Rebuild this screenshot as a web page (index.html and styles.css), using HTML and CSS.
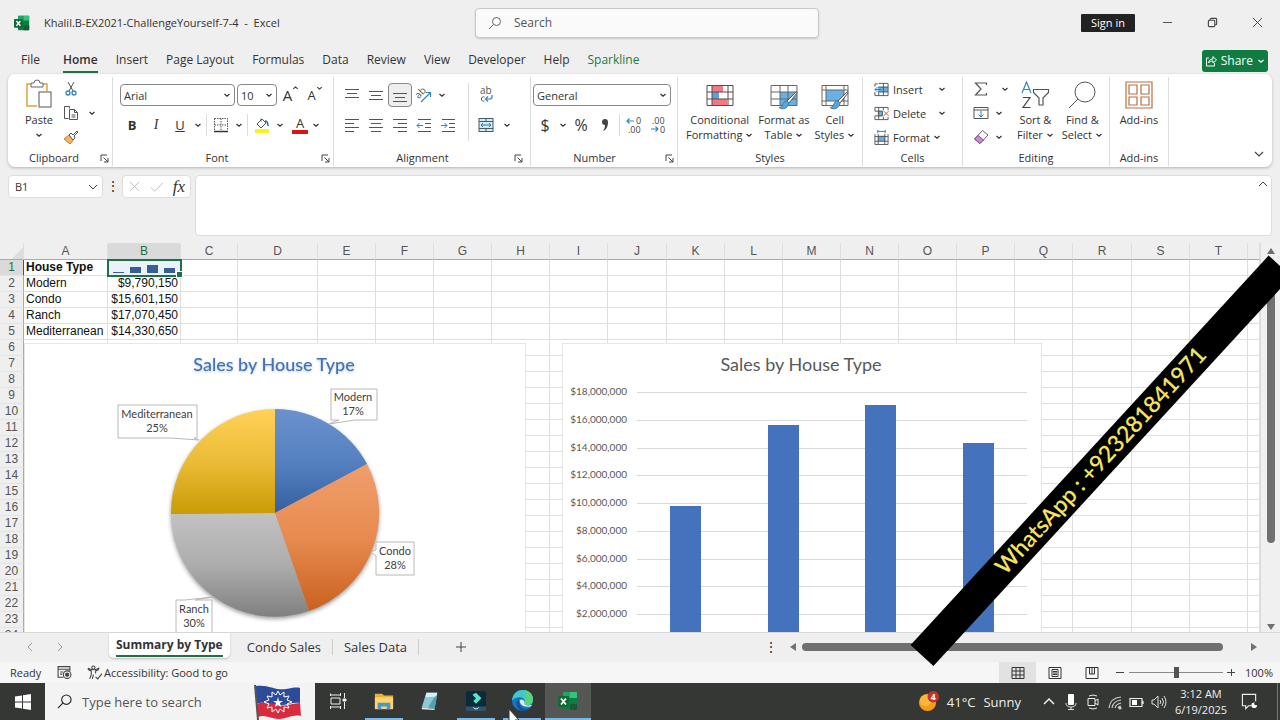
FILE: index.html
```html
<!DOCTYPE html>
<html lang="en">
<head>
    <meta charset="UTF-8">
    <meta name="viewport" content="width=device-width, initial-scale=1.0">
    <title>Khalil.B-EX2021-ChallengeYourself-7-4 - Excel</title>
    <link rel="stylesheet" href="styles.css">
</head>
<body>
    <!-- Shared icons -->
    <svg class="defs" aria-hidden="true">
        <symbol id="chev" viewBox="0 0 8 8"><path d="M1.5 3 4 5.2 6.500 3" fill="none" stroke="currentColor" stroke-width="1.200"/></symbol>
        <symbol id="launch" viewBox="0 0 9 9"><path d="M1 7V1h6M3.500 3.500 8 8M8 4v4H4" fill="none" stroke="#444"/></symbol>
        <symbol id="excel" viewBox="0 0 20 20">
            <path d="M6 1h12a1 1 0 0 1 1 1v16a1 1 0 0 1-1 1H6a1 1 0 0 1-1-1V2a1 1 0 0 1 1-1z" fill="#107c41"/>
            <path d="M5 1h7v6H5z" fill="#21a366"/><path d="M12 1h6a1 1 0 0 1 1 1v5h-7z" fill="#33c481"/>
            <path d="M12 13h7v5a1 1 0 0 1-1 1h-6z" fill="#185c37"/>
            <rect x="0" y="5" width="11" height="11" rx="1" fill="#0e6b38"/>
            <path d="M3 7.500 8 13.500M8 7.500 3 13.500" stroke="#fff" stroke-width="1.700"/>
        </symbol>
        <symbol id="brush" viewBox="0 0 20 20">
            <path d="M18.500 1.500 9 11l2 2 8-10z" fill="#fff" stroke="#555"/>
            <path d="M9 11c-3 0-4 2-4.500 4S2 17.500 1 17.500c3 2.500 9 1.500 10-4.500z" fill="#5aa5dc" stroke="#3b7fb0"/>
        </symbol>
    </svg>

    <div class="app">
        <header class="titlebar">
            <div class="doc">
                <svg class="doc-logo"><use href="#excel"/></svg>
                <span>Khalil.B-EX2021-ChallengeYourself-7-4&nbsp; -&nbsp; Excel</span>
            </div>
            <label class="search">
                <svg viewBox="0 0 14 14"><circle cx="8.500" cy="5.500" r="4" fill="none" stroke="#666"/><path d="M5.500 8.500 1 13" stroke="#666"/></svg>
                <input type="text" placeholder="Search" aria-label="Search">
            </label>
            <div class="window">
                <button class="signin">Sign in</button>
                <button class="win-btn" aria-label="Minimize"><svg viewBox="0 0 12 12"><path d="M1 6h10" stroke="#444"/></svg></button>
                <button class="win-btn" aria-label="Restore"><svg viewBox="0 0 12 12" fill="none" stroke="#444" stroke-width="1.200"><rect x="1.500" y="3.500" width="7" height="7" rx="1"/><path d="M3.500 3.500v-1a1 1 0 0 1 1-1h5a1 1 0 0 1 1 1v5a1 1 0 0 1-1 1h-1"/></svg></button>
                <button class="win-btn" aria-label="Close"><svg viewBox="0 0 12 12"><path d="m1 1 10 10M11 1 1 11" stroke="#444"/></svg></button>
            </div>
        </header>

        <nav class="menu">
            <button>File</button>
            <button class="active">Home</button>
            <button>Insert</button>
            <button>Page Layout</button>
            <button>Formulas</button>
            <button>Data</button>
            <button>Review</button>
            <button>View</button>
            <button>Developer</button>
            <button>Help</button>
            <button class="context">Sparkline</button>
            <button class="share">
                <svg viewBox="0 0 12 12" fill="none" stroke="#fff"><path d="M4 3H1.500v8h8V8M3.500 8c.5-3 2-4 4.500-4V1.500L11.500 5 8 8V6C6 6 4.500 6.500 3.500 8z"/></svg>
                Share
                <svg class="chev"><use href="#chev"/></svg>
            </button>
        </nav>

        <section class="ribbon" aria-label="Ribbon">
            <div class="group g-clipboard">
                <div class="group-body">
                    <button class="big">
                        <svg class="big-icon" viewBox="0 0 28 28" fill="none">
                            <path d="M6 3H2v22h10M18 3h4v7" stroke="#e0a43a" stroke-width="1.500"/>
                            <path d="M6 5V2h3a3 3 0 0 1 6 0h3v4H6z" fill="#fff" stroke="#666"/>
                            <rect x="14" y="11" width="12" height="15" fill="#fff" stroke="#555"/>
                        </svg>
                        Paste
                        <svg class="chev"><use href="#chev"/></svg>
                    </button>
                    <div class="stack">
                        <button class="tool" aria-label="Cut"><svg viewBox="0 0 16 16" fill="none"><path d="M5 1l5 9M11 1 6 10" stroke="#555"/><circle cx="5" cy="12" r="2" stroke="#2f86c4" stroke-width="1.300"/><circle cx="11" cy="12" r="2" stroke="#2f86c4" stroke-width="1.300"/></svg></button>
                        <div class="pair">
                            <button class="tool" aria-label="Copy"><svg viewBox="0 0 16 16" fill="none" stroke="#555"><path d="M5.500 13.500h-4v-12h5v2"/><path d="M6.500 4.500h5l3 3v7h-8z" fill="#fff"/><path d="M11.500 4.500v3h3M8.500 10h4M8.500 12h4"/></svg></button>
                            <button class="drop" aria-label="Copy options"><svg class="chev"><use href="#chev"/></svg></button>
                        </div>
                        <button class="tool" aria-label="Format Painter"><svg viewBox="0 0 16 16"><path d="M1 10l5-4 5 4-4 5z" fill="#f5b26b" stroke="#cf7a2a"/><path d="m6 6 2-2 2 2 4-4 1 1-4 4 1 2-2 2z" fill="#fff" stroke="#555"/></svg></button>
                    </div>
                </div>
                <div class="group-name">Clipboard<svg class="launch"><use href="#launch"/></svg></div>
            </div>

            <div class="group g-font">
                <div class="group-body rows">
                    <div class="row">
                        <label class="combo font-name"><select aria-label="Font"><option>Arial</option></select><svg class="chev"><use href="#chev"/></svg></label>
                        <label class="combo font-size"><select aria-label="Font size"><option>10</option></select><svg class="chev"><use href="#chev"/></svg></label>
                        <button class="tool grow">A<svg class="chev flip"><use href="#chev"/></svg></button>
                        <button class="tool shrink">A<svg class="chev"><use href="#chev"/></svg></button>
                    </div>
                    <div class="row">
                        <button class="tool bold">B</button>
                        <button class="tool italic">I</button>
                        <button class="tool underline">U</button>
                        <button class="drop" aria-label="Underline options"><svg class="chev"><use href="#chev"/></svg></button>
                        <span class="sep"></span>
                        <button class="tool" aria-label="Borders"><svg viewBox="0 0 16 16" fill="none" stroke="#555"><path d="M1.500 1.500h13v12M1.500 1.500v12M8 1.500v12M1.500 8h13" stroke-dasharray="1.500 1"/><path d="M1 14.500h14" stroke="#333" stroke-width="1.500"/></svg></button>
                        <button class="drop" aria-label="Border options"><svg class="chev"><use href="#chev"/></svg></button>
                        <span class="sep"></span>
                        <button class="tool" aria-label="Fill color"><svg viewBox="0 0 16 16"><path d="M7 1.500v3M3 7l5-5 4 4-5 5z" fill="#fff" stroke="#555"/><path d="M11 4c2 0 3 2 3 5" fill="none" stroke="#2f6fa8" stroke-width="1.500"/><path d="M1 12h14v4H1z" fill="#f7f51b"/></svg></button>
                        <button class="drop" aria-label="Fill options"><svg class="chev"><use href="#chev"/></svg></button>
                        <button class="tool font-color">A</button>
                        <button class="drop" aria-label="Font color options"><svg class="chev"><use href="#chev"/></svg></button>
                    </div>
                </div>
                <div class="group-name">Font<svg class="launch"><use href="#launch"/></svg></div>
            </div>

            <div class="group g-align">
                <div class="group-body">
                    <div class="rows">
                        <div class="row">
                            <button class="tool" aria-label="Top align"><svg viewBox="0 0 16 16" stroke="#555"><path d="M1 2.500h14M3 6.500h10M1 10.500h14"/></svg></button>
                            <button class="tool" aria-label="Middle align"><svg viewBox="0 0 16 16" stroke="#555"><path d="M1 4.500h14M3 8.500h10M1 12.500h14"/></svg></button>
                            <button class="tool pressed" aria-label="Bottom align"><svg viewBox="0 0 16 16" stroke="#555"><path d="M1 6.500h14M3 10.500h10M1 14.500h14"/></svg></button>
                            <button class="tool orient" aria-label="Orientation"><svg viewBox="0 0 16 16"><text x="0" y="10" transform="rotate(-45 4 8)" font-size="10" fill="#555">ab</text><path d="M5 15 14 6M10 5.500h4.500V10" fill="none" stroke="#2f86c4" stroke-width="1.200"/></svg></button>
                            <button class="drop" aria-label="Orientation options"><svg class="chev"><use href="#chev"/></svg></button>
                        </div>
                        <div class="row">
                            <button class="tool" aria-label="Align left"><svg viewBox="0 0 16 16" stroke="#555"><path d="M1 2.500h14M1 6.500h9M1 10.500h14M1 14.500h9"/></svg></button>
                            <button class="tool" aria-label="Center"><svg viewBox="0 0 16 16" stroke="#555"><path d="M1 2.500h14M3 6.500h10M1 10.500h14M3 14.500h10"/></svg></button>
                            <button class="tool" aria-label="Align right"><svg viewBox="0 0 16 16" stroke="#555"><path d="M1 2.500h14M6 6.500h9M1 10.500h14M6 14.500h9"/></svg></button>
                            <button class="tool" aria-label="Decrease indent"><svg viewBox="0 0 16 16" fill="none" stroke="#555"><path d="M2 2.500h13M9 6.500h6M9 10.500h6M2 14.500h13"/><path d="M7 8.500H1M3.500 6 1 8.500 3.500 11" stroke="#2f86c4"/></svg></button>
                            <button class="tool" aria-label="Increase indent"><svg viewBox="0 0 16 16" fill="none" stroke="#555"><path d="M2 2.500h13M9 6.500h6M9 10.500h6M2 14.500h13"/><path d="M1 8.500h6M4.500 6 7 8.500 4.500 11" stroke="#2f86c4"/></svg></button>
                        </div>
                    </div>
                    <span class="sep tall"></span>
                    <div class="rows">
                        <div class="row"><button class="tool" aria-label="Wrap text"><svg viewBox="0 0 16 16"><text x="2" y="7" font-size="10" fill="#555">ab</text><path d="M6.500 10a2.200 2.200 0 1 0 0 4" fill="none" stroke="#555"/><path d="M14 8v2q0 2-2 2H8M10 9.500 7.500 12l2.500 2.500" fill="none" stroke="#2f86c4" stroke-width="1.200"/></svg></button></div>
                        <div class="row">
                            <button class="tool" aria-label="Merge and center"><svg viewBox="0 0 16 16" fill="none"><rect x="1" y="1.500" width="14" height="13" fill="#d4ebf8" stroke="#4a5b66"/><path d="M1 4.500h14M1 11.500h14M8 1.500v3M8 11.500v3" stroke="#4a5b66"/><path d="M3 8h10M5 6 3 8l2 2M11 6l2 2-2 2" stroke="#1f7fc0"/></svg></button>
                            <button class="drop wide" aria-label="Merge options"><svg class="chev"><use href="#chev"/></svg></button>
                        </div>
                    </div>
                </div>
                <div class="group-name">Alignment<svg class="launch"><use href="#launch"/></svg></div>
            </div>

            <div class="group g-number">
                <div class="group-body rows">
                    <div class="row"><label class="combo number-format"><select aria-label="Number format"><option>General</option></select><svg class="chev"><use href="#chev"/></svg></label></div>
                    <div class="row">
                        <button class="tool sign">$</button>
                        <button class="drop" aria-label="Currency options"><svg class="chev"><use href="#chev"/></svg></button>
                        <button class="tool sign">%</button>
                        <button class="tool" aria-label="Comma style"><svg viewBox="0 0 16 16"><path d="M5 5a3 3 0 1 1 6 0c0 5-2 8-5 9 1-2 2-3 2-6a3 3 0 0 1-3-3z" fill="#444"/></svg></button>
                        <span class="sep"></span>
                        <button class="tool" aria-label="Increase decimal"><svg viewBox="0 0 16 16"><text x="10" y="7" font-size="9" fill="#444">0</text><text x="2" y="16" font-size="9" fill="#444">.00</text><path d="M8 4H1M3.500 1.500 1 4l2.500 2.500" fill="none" stroke="#2f86c4" stroke-width="1.200"/></svg></button>
                        <button class="tool" aria-label="Decrease decimal"><svg viewBox="0 0 16 16"><text x="2" y="7" font-size="9" fill="#444">.00</text><text x="10" y="16" font-size="9" fill="#444">0</text><path d="M1 12h7M5.500 9.500 8 12l-2.500 2.500" fill="none" stroke="#2f86c4" stroke-width="1.200"/></svg></button>
                    </div>
                </div>
                <div class="group-name">Number<svg class="launch"><use href="#launch"/></svg></div>
            </div>

            <div class="group g-styles">
                <div class="group-body">
                    <button class="big">
                        <svg class="big-icon" viewBox="0 0 28 28" fill="none"><rect x="1" y="4" width="26" height="21" fill="#fff"/><path d="M6 4h11v7H6zM6 18h15v7H6z" fill="#f4797c"/><path d="M6 11h7v7H6z" fill="#5f9fd2"/><path d="M1 4.500h26v20H1zM6 4.500v20M22 4.500v20M1 11h26M1 18h26" stroke="#5b4b4b"/></svg>
                        Conditional<br>Formatting <svg class="chev"><use href="#chev"/></svg>
                    </button>
                    <button class="big">
                        <svg class="big-icon" viewBox="0 0 28 28" fill="none"><path d="M10 11h17v14H10z" fill="#69b0e4"/><path d="M1 4.500h26v20H1zM10 4.500v20M18 4.500v20M1 11h26M1 18h26" stroke="#666"/><use href="#brush" x="8" y="9" width="20" height="20"/></svg>
                        Format as<br>Table <svg class="chev"><use href="#chev"/></svg>
                    </button>
                    <button class="big">
                        <svg class="big-icon" viewBox="0 0 28 28" fill="none"><path d="M5 9h18v11H5z" fill="#69b0e4"/><path d="M1 4.500h26v20H1zM5 4.500v20M23 4.500v20M1 9h26M1 20h26" stroke="#666"/><use href="#brush" x="8" y="9" width="20" height="20"/></svg>
                        Cell<br>Styles <svg class="chev"><use href="#chev"/></svg>
                    </button>
                </div>
                <div class="group-name">Styles</div>
            </div>

            <div class="group g-cells">
                <div class="group-body stack">
                    <button class="line"><svg class="icon" viewBox="0 0 16 16" fill="none"><path d="M4 5h11v6H4z" fill="#69b0e4"/><path d="M5 1.500h10v13H1v-4M10 1.500v13M5 11v3.500M5 5.500h10M5 10.500h10M1 5V2h3" stroke="#555"/><path d="M8 8H1M3.500 5.500 1 8l2.500 2.500" stroke="#1f7fc0"/></svg><span>Insert</span><svg class="chev"><use href="#chev"/></svg></button>
                    <button class="line"><svg class="icon" viewBox="0 0 16 16" fill="none"><path d="M4 5h5v6H4z" fill="#69b0e4"/><path d="M1 5.500V1.500h14v3M1 10.500v4h14v-3M5 1.500v13M10 1.500v3M10 11.500v3M1 5.500h8v5H1" stroke="#555"/><path d="m10.500 5.500 5 5M15.500 5.500l-5 5" stroke="#d9483b"/></svg><span>Delete</span><svg class="chev"><use href="#chev"/></svg></button>
                    <button class="line tight"><svg class="icon" viewBox="0 0 16 16" fill="none"><path d="M4 6h8v6H4z" fill="#69b0e4"/><path d="M1 4.500v11h14v-11M4.500 4v11M11.500 4v11M1 7h14M1 12h14" stroke="#555"/><path d="M4 1.500h8M4 0v3M12 0v3" stroke="#1f7fc0"/></svg><span>Format</span><svg class="chev"><use href="#chev"/></svg></button>
                </div>
                <div class="group-name">Cells</div>
            </div>

            <div class="group g-editing">
                <div class="group-body">
                    <div class="stack">
                        <div class="pair wide"><button class="tool" aria-label="AutoSum"><svg viewBox="0 0 16 16"><path d="M13.500 4V2h-11l5.500 6-5.500 6h11v-2" fill="none" stroke="#555" stroke-width="1.200"/></svg></button><button class="drop" aria-label="AutoSum options"><svg class="chev"><use href="#chev"/></svg></button></div>
                        <div class="pair"><button class="tool" aria-label="Fill"><svg viewBox="0 0 16 16" fill="none" stroke="#555"><path d="M1 2.500h14v11H1zM1 5h14"/><path d="M8 6v6M5.500 9.500 8 12l2.500-2.500" stroke="#1f7fc0"/></svg></button><button class="drop" aria-label="Fill options"><svg class="chev"><use href="#chev"/></svg></button></div>
                        <div class="pair"><button class="tool" aria-label="Clear"><svg viewBox="0 0 16 16"><path d="M9.500 1.500 15 6l-8 8.500L1.500 10z" fill="#fff" stroke="#7d4f8b"/><path d="M5 6.500 1.500 10 7 14.500 10.500 11z" fill="#c98ad6" stroke="#7d4f8b"/></svg></button><button class="drop" aria-label="Clear options"><svg class="chev"><use href="#chev"/></svg></button></div>
                    </div>
                    <button class="big">
                        <svg class="big-icon" viewBox="0 0 28 28" fill="none"><path d="M1 12 5.500 1 10 12M2.500 8.500h6" stroke="#2f86c4" stroke-width="1.200"/><path d="M2 16.500h7L2 26.500h7.500" stroke="#444" stroke-width="1.200"/><path d="M12.500 8.500h15v3l-5.500 5.500v7h-4v-7l-5.500-5.500z" stroke="#555" stroke-width="1.200"/></svg>
                        Sort &amp;<br>Filter <svg class="chev"><use href="#chev"/></svg>
                    </button>
                    <button class="big">
                        <svg class="big-icon" viewBox="0 0 28 28" fill="none" stroke="#555"><circle cx="17" cy="11" r="10"/><path d="M10 18 1 27"/></svg>
                        Find &amp;<br>Select <svg class="chev"><use href="#chev"/></svg>
                    </button>
                </div>
                <div class="group-name">Editing</div>
            </div>

            <div class="group g-addins">
                <div class="group-body">
                    <button class="big">
                        <svg class="big-icon" viewBox="0 0 28 28" fill="none" stroke="#b5713f" stroke-width="1.200"><path d="M1 1h26v26H1zM4 4h8v9H4zM16 4h8v9h-8zM4 16h8v8H4zM16 16h8v8h-8z"/></svg>
                        Add-ins
                    </button>
                </div>
                <div class="group-name">Add-ins</div>
            </div>
            <button class="collapse" aria-label="Collapse ribbon"><svg viewBox="0 0 10 10"><path d="M1 3l4 4 4-4" fill="none" stroke="#444" stroke-width="1.200"/></svg></button>
        </section>

        <section class="formula" aria-label="Formula bar">
            <label class="name-box"><input type="text" value="B1" aria-label="Name box"><svg viewBox="0 0 10 10"><path d="M1 3l4 4 4-4" fill="none" stroke="#444"/></svg></label>
            <span class="dots">⋮</span>
            <div class="fx">
                <button aria-label="Cancel"><svg viewBox="0 0 14 14"><path d="m2 2 10 10M12 2 2 12" stroke="#bbb"/></svg></button>
                <button aria-label="Enter"><svg viewBox="0 0 14 14"><path d="m1 8 4 4 9-9" fill="none" stroke="#bbb"/></svg></button>
                <button class="fx-btn">fx</button>
            </div>
            <div class="formula-box">
                <textarea aria-label="Formula"></textarea>
                <button aria-label="Collapse formula bar"><svg viewBox="0 0 10 10"><path d="M1 7l4-4 4 4" fill="none" stroke="#444"/></svg></button>
            </div>
        </section>

        <main class="workspace">
            <div class="sheet">
                <table class="grid">
                    <colgroup id="cols"></colgroup>
                    <thead><tr id="letters"></tr></thead>
                    <tbody id="cells"></tbody>
                </table>

                <!-- Pie chart -->
                <svg class="chart pie" viewBox="0 0 502 300" role="img" aria-label="Sales by House Type, pie chart">
                    <defs>
                        <linearGradient id="blue" x1="0" y1="0" x2="0" y2="1"><stop offset="0" stop-color="#6c91cd"/><stop offset="0.500" stop-color="#5581c2"/><stop offset="1" stop-color="#355f9f"/></linearGradient>
                        <linearGradient id="orange" x1="0" y1="0" x2="0" y2="1"><stop offset="0" stop-color="#f09e6c"/><stop offset="0.500" stop-color="#e78b50"/><stop offset="1" stop-color="#ca611f"/></linearGradient>
                        <linearGradient id="gray" x1="0" y1="0" x2="0" y2="1"><stop offset="0" stop-color="#c2c2c2"/><stop offset="0.500" stop-color="#adadad"/><stop offset="1" stop-color="#808080"/></linearGradient>
                        <linearGradient id="gold" x1="0" y1="0" x2="0" y2="1"><stop offset="0" stop-color="#ffd158"/><stop offset="0.500" stop-color="#ebbc37"/><stop offset="1" stop-color="#c99b05"/></linearGradient>
                    </defs>
                    <rect class="chart-bg" x="0" y="0" width="502" height="300"/>
                    <text class="pie-title" x="250" y="28">Sales by House Type</text>
                    <g class="slices">
                        <path d="M251 170V66A104 104 0 0 1 343 121z" fill="url(#blue)"/>
                        <path d="M251 170 343 121A104 104 0 0 1 285 268z" fill="url(#orange)"/>
                        <path d="M251 170 285 268A104 104 0 0 1 147 171z" fill="url(#gray)"/>
                        <path d="M251 170 147 171A104 104 0 0 1 251 66z" fill="url(#gold)"/>
                    </g>
                    <g class="callouts">
                        <path d="M307 46h46v31h-22l-26 4 10-4h-8z"/>
                        <path d="M94 62h79v33h-3l5 2-29-2H94z"/>
                        <path d="M352 199h38v33h-38v-19l-5-4 5-2z"/>
                        <path d="M152 257h9l28-3-18 3h17v33h-36z"/>
                    </g>
                    <g class="labels">
                        <text x="329" y="58">Modern</text><text x="329" y="72">17%</text>
                        <text x="133" y="75">Mediterranean</text><text x="133" y="89">25%</text>
                        <text x="371" y="212">Condo</text><text x="371" y="226">28%</text>
                        <text x="170" y="270">Ranch</text><text x="170" y="284">30%</text>
                    </g>
                </svg>

                <!-- Column chart -->
                <svg class="chart columns" viewBox="0 0 480 300" role="img" aria-label="Sales by House Type, column chart">
                    <rect class="chart-bg" x="0" y="0" width="480" height="300"/>
                    <text class="column-title" x="239" y="28">Sales by House Type</text>
                    <g id="axis"></g>
                    <g id="bars"></g>
                </svg>
            </div>
            <div class="vscroll">
                <svg viewBox="0 0 8 8"><path d="M4 1 8 7H0z"/></svg>
                <div class="track"><div class="thumb"></div></div>
                <svg viewBox="0 0 8 8"><path d="M0 1h8L4 7z"/></svg>
            </div>
        </main>

        <div class="tabs">
            <button class="nav" aria-label="Previous sheet"><svg viewBox="0 0 10 10"><path d="M7 1 3 5l4 4" fill="none" stroke="#999"/></svg></button>
            <button class="nav" aria-label="Next sheet"><svg viewBox="0 0 10 10"><path d="m3 1 4 4-4 4" fill="none" stroke="#999"/></svg></button>
            <button class="sheet-tab current"><span>Summary by Type</span></button>
            <button class="sheet-tab">Condo Sales</button>
            <button class="sheet-tab">Sales Data</button>
            <button class="add" aria-label="New sheet"><svg viewBox="0 0 12 12"><path d="M6 1v10M1 6h10" stroke="#444"/></svg></button>
            <div class="hscroll">
                <span class="dots">⋮</span>
                <svg viewBox="0 0 8 8"><path d="M7 0v8L1 4z"/></svg>
                <div class="thumb"></div>
                <svg viewBox="0 0 8 8"><path d="M1 0v8l6-4z"/></svg>
            </div>
        </div>

        <footer class="status">
            <span class="ready">Ready</span>
            <svg class="icon" viewBox="0 0 14 14" fill="none" stroke="#444"><path d="M6 11.500H1v-10h11v4M1 4h11M3 6.500h3M3 8.500h2"/><circle cx="9.500" cy="9" r="3.500"/><circle cx="9.500" cy="9" r="1.500" fill="#444"/></svg>
            <button class="access">
                <svg class="icon" viewBox="0 0 14 14" fill="none" stroke="#444"><circle cx="6" cy="2.500" r="1.500"/><path d="M1 3q0 2 3 2.500V9l-1.500 4M1 3q3 1.500 5 1.500T11 3q0 2-3 2.500V8M6 9l-1 4M8 11l2 2 4-5"/></svg>
                Accessibility: Good to go
            </button>
            <div class="views">
                <button class="view on" aria-label="Normal view"><svg viewBox="0 0 14 14" fill="none" stroke="#333"><path d="M1 1.500h12v11H1zM5 1.500v11M9 1.500v11M1 5h12M1 9h12"/></svg></button>
                <button class="view" aria-label="Page layout view"><svg viewBox="0 0 14 14" fill="none" stroke="#333"><path d="M1 1.500h12v11H1zM4 3.500h6v7H4zM5 5.500h4M5 7h4M5 8.500h4"/></svg></button>
                <button class="view" aria-label="Page break view"><svg viewBox="0 0 14 14" fill="none" stroke="#333"><path d="M1 1.500h12v11H1zM4.500 1.500V8h5V1.500M7 1.500V8"/></svg></button>
                <button class="step" aria-label="Zoom out"><svg viewBox="0 0 9 9"><path d="M0 4.500h8" stroke="#444"/></svg></button>
                <input type="range" min="0" max="100" value="50" aria-label="Zoom">
                <button class="step" aria-label="Zoom in"><svg viewBox="0 0 9 9"><path d="M0 4.500h8M4.500 1v7" stroke="#444"/></svg></button>
                <span class="zoom">100%</span>
            </div>
        </footer>

        <div class="taskbar">
            <button class="start" aria-label="Start"><svg viewBox="0 0 16 16" fill="#fff"><path d="M0 2.500 7 1.500v6H0zM8 1.300 16 0v7.500H8zM0 8.500h7v6l-7-1zM8 8.500h8V16l-8-1.300z"/></svg></button>
            <label class="task-search">
                <svg class="glass" viewBox="0 0 16 16"><circle cx="10" cy="6" r="5" fill="none" stroke="#222" stroke-width="1.200"/><path d="M6.500 9.500 1 15" stroke="#222" stroke-width="1.200"/></svg>
                <input type="text" placeholder="Type here to search" aria-label="Type here to search">
                <svg class="flag" viewBox="0 0 50 36">
                    <path d="M3 2c12-2 20 5 30 3 6-1 10-2 14-1v15c-8-1-14 3-22 2S10 17 3 20z" fill="#2d4b9b"/>
                    <path d="M4 20c7-3 13-1 21 1s14-2 22-2l1 13c-8-2-14 3-22 3S12 30 5 33z" fill="#d92b3e"/>
                    <path d="M2 1l3 35" stroke="#555" stroke-width="2"/>
                    <path d="m25 7 2 4 4-3v5l5-1-2 4 5 2-5 2 2 4-5-1v5l-4-3-2 4-2-4-4 3v-5l-5 1 2-4-5-2 5-2-2-4 5 1V8l4 3z" fill="none" stroke="#fff"/>
                    <path d="m25 13 1 4h4l-3 2 1 4-3-2-3 2 1-4-3-2h4z" fill="#fff"/>
                </svg>
            </label>
            <button class="app-btn" aria-label="Task view"><svg viewBox="0 0 20 20" fill="none" stroke="#eee"><path d="M2.500 5V2.500M2.500 4h10M12.500 2v3M3 7h9v6H3zM2.500 18v-3M2.500 16h10M12.500 18v-3M16.500 2v5M16.500 11v7"/><path d="M15 8h3v2h-3z" fill="#eee"/></svg></button>
            <button class="app-btn open" aria-label="File Explorer"><svg viewBox="0 0 22 20"><path d="M1 2h8l2 2h10v14H1z" fill="#e5b13c"/><path d="M1 6h20v13H1z" fill="#fbd56c"/><path d="M4 19v-7h14v7h-4v-3H8v3z" fill="#4c97cf"/></svg></button>
            <button class="app-btn" aria-label="Notepad"><svg viewBox="0 0 22 22"><path d="M7 2h12l-3 18-14-2z" fill="#8ec7d6"/><path d="M7 2h12l-1 4-12 1z" fill="#d8eff3"/><path d="M15 8l-6 10 7 2 3-16z" fill="#579fae"/><path d="m2 18 14 2v1L2 20z" fill="#e8e8e8"/></svg></button>
            <button class="app-btn open" aria-label="Filmora"><svg viewBox="0 0 22 22"><rect width="22" height="22" rx="2" fill="#0b2b38"/><path d="m7 4 4-2 6 6-6 6-3-3 3-3z" fill="#5de3cd"/><path d="M0 17h22v5H0z" fill="#31536d"/><path d="m8 18 2 2 1-1 1 1 2-2" fill="none" stroke="#fff"/></svg></button>
            <button class="app-btn open edge" aria-label="Edge"><svg viewBox="0 0 24 24"><circle cx="12" cy="12" r="11" fill="#1674c5"/><path d="M1 12C2 4 7 1 12 1c7 0 11 5 11 10 0 4-3 6-6 6-2 0-4-1-3-3 2-5-7-8-13-2z" fill="#40c8cc"/><path d="M14 1c6 1 9 5 9 10 0 4-3 6-6 6-2 0-4-1-3-3 1-1 2-8 0-13z" fill="#5bd27b"/><path d="M9 12c-2 5 3 11 11 8-4 4-12 4-14-3-1-4 1-6 3-5z" fill="#124f9c"/><path d="M9 12c0 4 4 8 12 6 1-1 0-2-1-1-4 1-7-1-6-4-1-2-4-3-5-1z" fill="#dfe9ef"/></svg></button>
            <button class="app-btn open focused" aria-label="Excel"><svg viewBox="0 0 20 20"><use href="#excel"/></svg></button>

            <div class="tray">
                <button class="weather">
                    <svg viewBox="0 0 22 22"><circle cx="10" cy="12" r="9" fill="#f59b1c"/><circle cx="8" cy="10" r="6" fill="#fbb63a"/><circle cx="16" cy="6" r="6" fill="#c8322b"/><text x="16" y="9" font-size="9" font-weight="bold" text-anchor="middle" fill="#fff">4</text></svg>
                    <span>41°C</span><span>Sunny</span>
                </button>
                <button class="tray-btn" aria-label="Hidden icons"><svg viewBox="0 0 16 16"><path d="m3 10 5-5 5 5" fill="none" stroke="#eee" stroke-width="1.500"/></svg></button>
                <button class="tray-btn" aria-label="Microphone"><svg viewBox="0 0 16 16"><rect x="5" y="0" width="6" height="11" rx="1" fill="#fff"/><path d="M3 9q0 4 5 4t5-4M8 13v3M5 15.500h6" fill="none" stroke="#ddd"/></svg></button>
                <button class="tray-btn" aria-label="Meet now"><svg viewBox="0 0 16 16" fill="none" stroke="#eee"><path d="M3 4.500h7v7H3zM10 7l3-2v6l-3-2M4 2q4-2 8 0M4 14q4 2 8 0"/></svg></button>
                <button class="tray-btn" aria-label="Network"><svg viewBox="0 0 16 16" fill="none" stroke="#ccc" stroke-width="1.200"><path d="M2 14Q3 4 14 3M5 14q1-7 9-8M8 14q1-4 6-5M11 14q1-2 3-2"/><circle cx="13" cy="14" r="1" fill="#fff"/></svg></button>
                <button class="tray-btn" aria-label="Battery"><svg viewBox="0 0 16 16"><path d="M1 4.500h12v8H1zM14 7v3" fill="none" stroke="#eee" stroke-width="1.200"/><path d="M3 6h5v5H3z" fill="#fff"/></svg></button>
                <button class="tray-btn" aria-label="Volume"><svg viewBox="0 0 16 16" fill="none" stroke="#ddd"><path d="M1 6h2l4-4v12l-4-4H1zM9 6q1.500 2 0 4M11 4q3 4 0 8M13 2q4 6 0 12"/></svg></button>
                <button class="clock"><span>3:12 AM</span><span>6/19/2025</span></button>
                <button class="notify" aria-label="Notifications"><svg viewBox="0 0 18 18"><path d="M11 13.500H8l-3 3v-3H1.500v-12h14V9" fill="none" stroke="#eee" stroke-width="1.200"/><circle cx="14" cy="13" r="3" fill="#fff"/><circle cx="16" cy="11" r="2" fill="#333"/></svg></button>
            </div>
        </div>
    </div>

    <div class="ribbon-banner">WhatsApp : +923281841971</div>
    <svg class="cursor" viewBox="0 0 12 18"><path d="M1 1v14l3-3 3 6 2-1-2-5h4z" fill="#fff" stroke="#333"/></svg>

    <script>
        const widths = { A: 84, B: 73, C: 57, D: 80, J: 59, R: 59 };
        const letters = 'ABCDEFGHIJKLMNOPQRST'.split('');
        const data = [
            ['House Type', ''],
            ['Modern', 9790150],
            ['Condo', 15601150],
            ['Ranch', 17070450],
            ['Mediterranean', 14330650]
        ];
        const sparkline = '<svg class="spark" viewBox="0 0 72 14"><path d="M5 11h11v1H5zM22 6h11v6H22zM39 4h11v8H39zM56 7h11v5H56z"/></svg>';

        function buildGrid() {
            const cols = letters.map(l => widths[l] || 58);
            document.getElementById('cols').innerHTML =
                [24, ...cols].map(w => `<col style="width: ${w}px">`).join('') + '<col>';

            document.getElementById('letters').innerHTML = '<th class="corner"></th>' +
                letters.map(l => `<th class="${l === 'B' ? 'picked' : ''}">${l}</th>`).join('') + '<th></th>';

            let html = '';
            for (let r = 0; r < 24; r++) {
                html += `<tr><th class="${r === 0 ? 'picked' : ''}">${r + 1}</th>`;
                for (let c = 0; c <= letters.length; c++) {
                    const value = data[r] && data[r][c] !== undefined ? data[r][c] : '';
                    if (r === 0 && c === 1) {
                        html += `<td class="selected">${sparkline}</td>`;
                    } else if (typeof value === 'number') {
                        html += `<td class="money">$${value.toLocaleString('en-US')}</td>`;
                    } else {
                        html += `<td class="${r === 0 ? 'head' : ''}">${value}</td>`;
                    }
                }
                html += '</tr>';
            }
            document.getElementById('cells').innerHTML = html;
        }

        function buildColumns() {
            const base = 299;
            const toY = value => Math.round(base - value * 250 / 18000000);
            let axis = '';
            for (let v = 18000000; v >= 2000000; v -= 2000000) {
                axis += `<path class="rule" d="M75 ${toY(v)}h390"/>` +
                    `<text class="tick" x="65" y="${toY(v) + 3}">$${v.toLocaleString('en-US')}</text>`;
            }
            document.getElementById('axis').innerHTML = axis;
            document.getElementById('bars').innerHTML = data.slice(1).map((row, i) =>
                `<rect class="bar" x="${108 + Math.round(i * 97.6)}" y="${toY(row[1])}" width="31" height="${base - toY(row[1])}"/>`
            ).join('');
        }

        buildGrid();
        buildColumns();
    </script>
</body>
</html>
```
FILE: styles.css
```css
* {
    box-sizing: border-box;
}
body {
    font-family: "Open Sans", "Noto Sans", sans-serif;
    font-size: 12px;
    background-color: #efefef;
    color: #333;
    margin: 0;
    overflow: hidden;
}
button, input, select, textarea {
    font: inherit;
    color: inherit;
    background: none;
    border: none;
    padding: 0;
    margin: 0;
}
button {
    cursor: pointer;
}
svg {
    display: block;
    flex: none;
}
.defs {
    display: none;
}
.chev {
    width: 8px;
    height: 8px;
}
.app {
    display: flex;
    flex-direction: column;
    height: 100vh;
}

/* Title bar */
.titlebar {
    display: grid;
    grid-template-columns: 1fr 344px 1fr;
    align-items: center;
    height: 45px;
    padding-left: 14px;
    flex: none;
}
.doc {
    display: flex;
    align-items: center;
    gap: 14px;
    font-size: 11px;
    white-space: nowrap;
}
.doc-logo {
    width: 16px;
    height: 16px;
}
.search {
    display: flex;
    align-items: center;
    gap: 12px;
    height: 30px;
    padding: 0 12px;
    background: #fafafa;
    border: 1px solid #c8c8c8;
    border-radius: 4px;
    box-shadow: 0 1px 2px rgba(0, 0, 0, 0.15);
}
.search svg {
    width: 14px;
    height: 14px;
}
.search input {
    flex: 1;
    outline: none;
}
.window {
    display: flex;
    justify-content: flex-end;
    align-items: center;
}
.signin {
    background: #222;
    color: white;
    width: 54px;
    height: 18px;
    font-size: 11px;
    line-height: 18px;
    border-radius: 1px;
    margin-right: 10px;
}
.win-btn {
    width: 45px;
    height: 30px;
    display: grid;
    place-items: center;
}
.win-btn svg {
    width: 11px;
    height: 11px;
}

/* Menu */
.menu {
    display: flex;
    align-items: center;
    height: 29px;
    gap: 18px;
    padding: 2px 12px 0 21px;
    flex: none;
}
.menu button {
    height: 24px;
    border-bottom: 2px solid transparent;
    white-space: nowrap;
}
.menu .active {
    font-weight: 600;
    border-bottom-color: #1e7145;
    margin-left: 5px;
}
.menu .context {
    color: #1a7a43;
}
.menu .share {
    display: flex;
    align-items: center;
    gap: 4px;
    margin-left: auto;
    height: 22px;
    padding: 0 3px;
    background: #107c41;
    color: white;
    border: none;
    border-radius: 3px;
}
.share svg:first-child {
    width: 12px;
    height: 12px;
}

/* Ribbon */
.ribbon {
    display: flex;
    height: 93px;
    margin: 0 8px;
    padding: 3px 0 1px;
    background: white;
    border-radius: 7px;
    box-shadow: 0 1px 3px rgba(0, 0, 0, 0.25);
    flex: none;
}
.group {
    display: flex;
    flex-direction: column;
    flex: none;
    border-right: 1px solid #dcdcdc;
}
.group-body {
    display: flex;
    flex: 1;
    min-height: 0;
}
.group-name {
    position: relative;
    flex: none;
    height: 16px;
    line-height: 16px;
    font-size: 11px;
    text-align: center;
    padding-right: 12px;
}
.launch {
    position: absolute;
    right: 3px;
    bottom: 3px;
    width: 9px;
    height: 9px;
}
.g-clipboard { width: 105px; }
.g-font { width: 221px; }
.g-align { width: 197px; }
.g-number { width: 147px; }
.g-styles { width: 185px; }
.g-cells { width: 100px; }
.g-editing { width: 147px; }
.g-addins { width: 59px; }
.g-align .group-name, .g-number .group-name {
    padding-right: 19px;
}
.g-styles .group-name, .g-cells .group-name, .g-editing .group-name, .g-addins .group-name {
    padding-right: 0;
}
.g-clipboard .group-body { padding-left: 14px; }
.g-font .group-body { padding-left: 7px; }
.g-align .group-body { padding-left: 6px; }
.g-align .launch { right: 7px; }
.g-number .group-body { padding-left: 2px; }
.g-styles .group-body { padding-left: 6px; gap: 1px; }
.g-cells .group-body { padding-left: 11px; }
.g-editing .group-body { padding-left: 6px; gap: 4px; }
.g-addins .group-body { justify-content: center; }

.rows {
    display: flex;
    flex-direction: column;
    gap: 6px;
    padding-top: 6px;
}
.row {
    display: flex;
    align-items: center;
    height: 24px;
}
.stack {
    display: flex;
    flex-direction: column;
}
.pair {
    display: flex;
    align-items: center;
}
.pair.wide {
    gap: 6px;
}
.tool {
    display: flex;
    align-items: center;
    justify-content: center;
    width: 24px;
    height: 24px;
    font-size: 13px;
}
.tool svg {
    width: 16px;
    height: 16px;
    overflow: visible;
}
.drop {
    width: 12px;
    height: 24px;
    display: grid;
    place-items: center;
}
.drop.wide, .g-clipboard .drop {
    width: 18px;
}
.sep {
    width: 1px;
    height: 22px;
    margin: 0 2px;
    background: #dcdcdc;
}
.sep.tall {
    height: 58px;
    margin: 6px 5px 0 8px;
}
.pressed {
    background: #eee;
    border: 1px solid #888;
    border-radius: 4px;
}
.big {
    display: block;
    line-height: 15px;
    text-align: center;
    align-self: flex-start;
    white-space: nowrap;
    font-size: 11px;
    padding: 4px 2px 0;
}
.big-icon {
    width: 28px;
    height: 28px;
    margin: 0 auto 3px;
    overflow: visible;
}
.big .chev {
    display: inline-block;
}
.g-clipboard .big {
    width: 34px;
    margin-right: 3px;
}
.g-clipboard .big .chev {
    display: block;
    margin: 4px auto 0;
}
.combo {
    display: flex;
    align-items: center;
    height: 22px;
    padding: 0 3px;
    border: 1px solid #888;
    border-radius: 4px;
}
.combo select {
    flex: 1;
    min-width: 0;
    appearance: none;
    outline: none;
    font-size: 11px;
}
.font-name {
    width: 115px;
    margin-right: 2px;
}
.font-size {
    width: 40px;
    margin-right: 2px;
}
.number-format {
    width: 138px;
}
.tool.grow, .tool.shrink {
    align-items: flex-start;
    line-height: 24px;
    font-size: 15px;
}
.tool.shrink {
    font-size: 13px;
}
.grow .chev, .shrink .chev {
    width: 7px;
    height: 10px;
}
.flip {
    transform: scaleY(-1);
}
.bold {
    font-weight: 700;
}
.italic {
    font-family: "Liberation Serif", serif;
    font-style: italic;
    font-size: 14px;
}
.underline {
    text-decoration: underline;
}
.font-color {
    height: 17px;
    width: 16px;
    margin: 0 2px 0 6px;
    line-height: 13px;
    border-bottom: 4px solid #d81414;
}
.sign {
    font-size: 16px;
}
.line {
    display: grid;
    grid-template-columns: 16px 42px 8px;
    gap: 3px;
    align-items: center;
    height: 24px;
    font-size: 11px;
    text-align: left;
}
.line.tight {
    grid-template-columns: 16px 37px 8px;
}
.icon {
    width: 15px;
    height: 15px;
}
.collapse {
    margin: auto 8px 7px auto;
}
.collapse svg {
    width: 10px;
    height: 10px;
}

/* Formula bar */
.formula {
    display: flex;
    align-items: flex-start;
    height: 76px;
    padding: 8px 8px 7px;
    flex: none;
}
.name-box, .fx, .formula-box {
    background: white;
    border: 1px solid #ddd;
    border-radius: 4px;
}
.name-box {
    display: flex;
    align-items: center;
    width: 95px;
    height: 23px;
    padding: 0 4px 0 6px;
}
.name-box input {
    flex: 1;
    min-width: 0;
    font-size: 11px;
}
.name-box svg, .formula-box svg {
    width: 10px;
    height: 10px;
}
.dots {
    width: 19px;
    text-align: center;
    line-height: 22px;
    font-size: 14px;
}
.fx {
    display: flex;
    width: 69px;
    height: 23px;
    margin-right: 4px;
}
.fx button {
    flex: 1;
    display: grid;
    place-items: center;
}
.fx svg {
    width: 13px;
    height: 13px;
}
.fx .fx-btn {
    font: italic 17px/20px "Liberation Serif", serif;
}
.formula-box {
    display: flex;
    align-items: flex-start;
    flex: 1;
    height: 61px;
    padding: 3px 3px;
}
.formula-box textarea {
    flex: 1;
    height: 100%;
    resize: none;
    outline: none;
}

/* Worksheet */
.workspace {
    display: flex;
    flex: 1;
    min-height: 0;
}
.sheet {
    position: relative;
    flex: 1;
    overflow: hidden;
    background: white;
}
.grid {
    width: 100%;
    table-layout: fixed;
    border-collapse: separate;
    border-spacing: 0;
    font-family: "Liberation Sans", Arial, sans-serif;
    color: #111;
}
.grid th, .grid td {
    height: 16px;
    padding: 0 2px;
    line-height: 15px;
    border-right: 1px solid #dedede;
    border-bottom: 1px solid #dedede;
    white-space: nowrap;
}
.grid th {
    padding: 0;
    background: #efefef;
    color: #555;
    font-weight: 400;
    font-size: 12px;
}
.grid thead th {
    height: 17px;
    border-bottom-color: #aaa;
}
.grid tbody th {
    border-right-color: #aaa;
    border-bottom-color: #e4e4e4;
}
.grid thead .picked {
    background: #dadada;
    color: #1e7145;
    border-bottom-color: #1e7145;
}
.grid tbody .picked {
    background: #dadada;
    color: #1e7145;
    border-right-color: #1e7145;
}
.grid .corner {
    background: linear-gradient(135deg, #efefef 70%, #ddd 70%);
}
.grid .head {
    font-weight: 700;
}
.grid .money {
    text-align: right;
}
.grid .selected {
    position: relative;
    padding: 0;
    background: #e9f2fa;
    outline: 2px solid #1e7145;
    outline-offset: -1px;
}
.grid .selected::after {
    content: "";
    position: absolute;
    right: -3px;
    bottom: -3px;
    width: 5px;
    height: 5px;
    background: #1e7145;
    border: 1px solid white;
    box-sizing: content-box;
}
.spark {
    width: 72px;
    height: 14px;
    fill: #376092;
}
.chart {
    position: absolute;
    top: 100px;
    height: 300px;
    font-family: Lato, sans-serif;
}
.pie {
    left: 24px;
    width: 502px;
}
.columns {
    left: 562px;
    width: 480px;
}
.chart-bg {
    fill: white;
    stroke: #d0d0d0;
}
.pie-title, .column-title {
    font-size: 18px;
    text-anchor: middle;
    fill: #595959;
}
.pie-title {
    fill: #4472b4;
    font-weight: 500;
    filter: drop-shadow(0 1px 1px rgba(68, 114, 180, 0.4));
}
.slices {
    filter: drop-shadow(0 2px 2px rgba(0, 0, 0, 0.4));
}
.callouts {
    fill: white;
    stroke: #b8b8b8;
}
.labels {
    font-size: 11px;
    text-anchor: middle;
    fill: #404040;
}
.rule {
    stroke: #d9d9d9;
    shape-rendering: crispEdges;
}
.tick {
    font-size: 10px;
    text-anchor: end;
    fill: #595959;
}
.bar {
    fill: #4472bc;
}
.vscroll {
    display: flex;
    flex-direction: column;
    align-items: center;
    width: 20px;
    padding: 4px 0 1px;
    border-left: 1px solid #ddd;
    background: #f0f0f0;
}
.vscroll svg, .hscroll svg {
    width: 8px;
    height: 8px;
    fill: #707070;
}
.track {
    flex: 1;
    padding-top: 5px;
}
.thumb {
    background: #707070;
    border-radius: 4px;
}
.track .thumb {
    width: 8px;
    height: 78%;
}

/* Sheet tabs */
.tabs {
    display: flex;
    align-items: center;
    height: 30px;
    padding: 0 0 2px 15px;
    border-top: 1px solid #d8d8d8;
    flex: none;
}
.nav {
    width: 30px;
    display: grid;
    place-items: center;
}
.nav svg {
    width: 10px;
    height: 10px;
}
.sheet-tab {
    height: 16px;
    line-height: 16px;
    padding: 0 11px;
    border-right: 1px solid #ccc;
    font-size: 13px;
    white-space: nowrap;
}
.sheet-tab.current {
    align-self: flex-start;
    height: 25px;
    margin: 0 6px 0 34px;
    padding: 0 7px;
    background: white;
    border: none;
    border-radius: 0 0 5px 5px;
    font-size: 12px;
    font-weight: 700;
    box-shadow: 0 1px 2px rgba(0, 0, 0, 0.2);
}
.current span {
    display: block;
    line-height: 20px;
    border-bottom: 2px solid #1e7145;
}
.add {
    margin-left: 36px;
}
.add svg {
    width: 12px;
    height: 12px;
}
.hscroll {
    display: flex;
    align-items: center;
    width: 41%;
    margin-left: auto;
    padding-right: 22px;
}
.hscroll .dots {
    margin-right: 9px;
}
.hscroll .thumb {
    flex: 1;
    height: 8px;
    margin: 0 27px 0 5px;
}

/* Status bar */
.status {
    display: flex;
    align-items: center;
    height: 21px;
    padding: 0 7px 0 10px;
    background: #f6f6f6;
    font-size: 11px;
    flex: none;
}
.ready {
    width: 47px;
}
.access {
    display: flex;
    align-items: center;
    gap: 2px;
    margin-left: 15px;
}
.views {
    display: flex;
    align-items: center;
    margin-left: auto;
}
.view {
    width: 37px;
    height: 21px;
    display: grid;
    place-items: center;
}
.view.on {
    background: #e2e2e2;
}
.view svg {
    width: 14px;
    height: 14px;
}
.step svg {
    width: 9px;
    height: 9px;
}
.view + .step {
    margin-left: 6px;
}
.views input {
    width: 94px;
    height: 14px;
    margin: 0 4px;
    appearance: none;
    background: linear-gradient(#888, #888) center / 100% 1px no-repeat;
}
.views input::-webkit-slider-thumb {
    appearance: none;
    width: 5px;
    height: 11px;
    background: #555;
}
.zoom {
    width: 37px;
    text-align: right;
}

/* Taskbar */
.taskbar {
    display: flex;
    height: 37px;
    background: #353735;
    color: #eee;
    flex: none;
}
.start {
    width: 45px;
    display: grid;
    place-items: center;
}
.start svg {
    width: 16px;
    height: 16px;
}
.task-search {
    display: flex;
    align-items: center;
    gap: 10px;
    width: 270px;
    padding: 0 12px;
    background: #f3f3f3;
    color: #333;
}
.task-search input {
    flex: 1;
    min-width: 0;
    font-size: 13px;
    outline: none;
}
.task-search input::placeholder, .search input::placeholder {
    color: #555;
    opacity: 1;
}
.glass {
    width: 15px;
    height: 15px;
}
.flag {
    width: 50px;
    height: 36px;
}
.app-btn {
    width: 46px;
    display: grid;
    place-items: center;
    border-bottom: 2px solid transparent;
}
.app-btn svg {
    width: 20px;
    height: 20px;
}
.app-btn.edge svg {
    width: 23px;
    height: 23px;
}
.app-btn.open {
    background: linear-gradient(#76b9ed, #76b9ed) bottom / 38px 2px no-repeat border-box;
}
.app-btn.focused {
    background-color: #555755;
    background-size: 46px 2px;
}
.tray {
    display: flex;
    align-items: center;
    margin-left: auto;
    padding-right: 2px;
}
.weather {
    display: flex;
    align-items: center;
    gap: 8px;
    margin-right: 17px;
    font-size: 13px;
}
.weather svg {
    width: 21px;
    height: 21px;
}
.tray-btn {
    width: 22px;
    height: 37px;
    display: grid;
    place-items: center;
}
.tray-btn svg {
    width: 16px;
    height: 16px;
}
.clock {
    display: flex;
    flex-direction: column;
    width: 62px;
    font-size: 11px;
    line-height: 16px;
}
.clock span {
    text-align: center;
}
.notify {
    width: 46px;
    height: 37px;
    display: grid;
    place-items: center;
    padding-right: 10px;
    border-right: 1px solid #777;
}
.notify svg {
    width: 17px;
    height: 17px;
}

/* Overlays */
.ribbon-banner {
    position: absolute;
    left: 72%;
    bottom: 49px;
    width: 529px;
    height: 31px;
    padding-left: 115px;
    background: black;
    color: #f3e35c;
    font: 600 23px/29px Lato, sans-serif;
    white-space: nowrap;
    transform-origin: left center;
    transform: rotate(-47.4deg);
}
.cursor {
    position: absolute;
    left: 508px;
    bottom: -6px;
    width: 12px;
    height: 18px;
}
```
